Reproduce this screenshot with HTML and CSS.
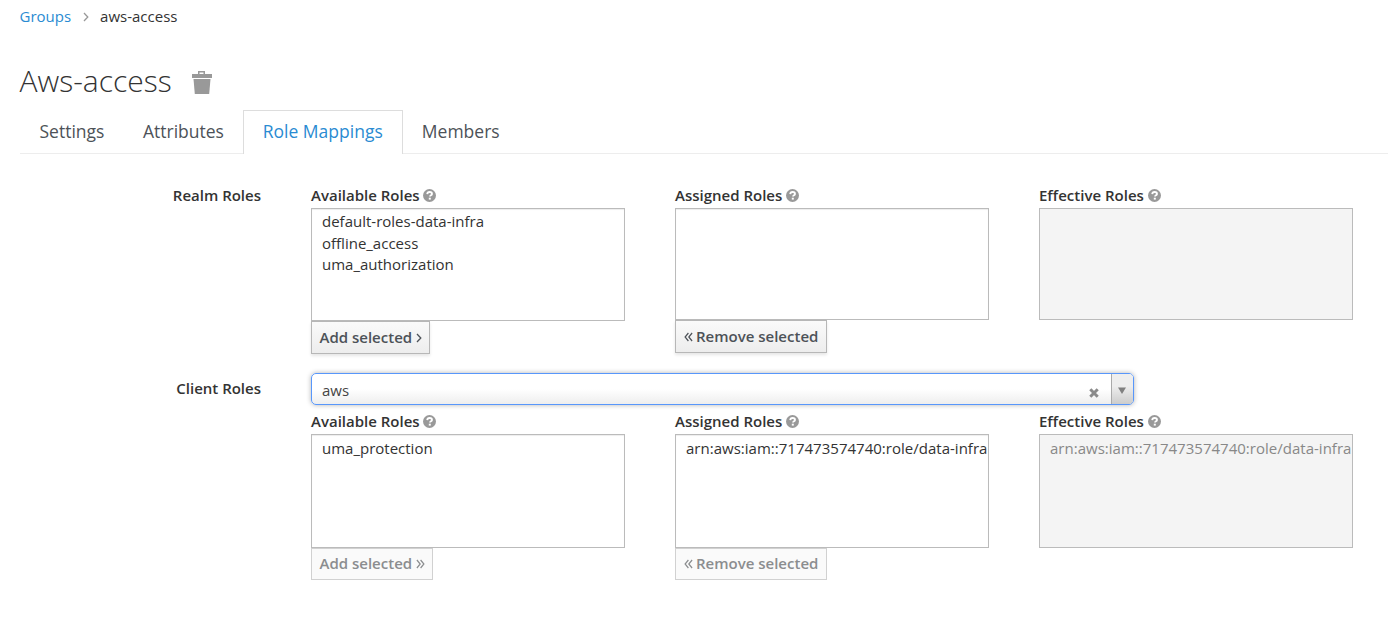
FILE: index.html
```html
<!DOCTYPE html>
<html lang="en">
<head>
<meta charset="utf-8">
<title>Aws-access</title>
<link rel="stylesheet" href="styles.css">
</head>
<body>
<svg class="symbols" width="0" height="0">
  <symbol id="help" viewBox="0 0 13 13"><circle cx="6.5" cy="6.5" r="6.5" fill="#999"/><path d="M4.2 5.1C4.3 3.7 5.2 3 6.6 3S9 3.8 9 4.9C9 6.3 7 6.3 7 7.6" fill="none" stroke="#fff" stroke-width="1.8"/><rect x="5.8" y="8.7" width="2" height="1.9" fill="#fff"/></symbol>
  <symbol id="right" viewBox="0 0 6 10"><path d="M1 1l3.8 4L1 9" fill="none" stroke="currentColor" stroke-width="1.3"/></symbol>
  <symbol id="dright" viewBox="0 0 9 10"><path d="M.9 1l3.3 4L.9 9M4.6 1l3.3 4-3.3 4" fill="none" stroke="currentColor" stroke-width="1.2"/></symbol>
  <symbol id="dleft" viewBox="0 0 9 10"><path d="M4.4 1L1.1 5l3.3 4M8.1 1L4.8 5l3.3 4" fill="none" stroke="currentColor" stroke-width="1.2"/></symbol>
</svg>
<main class="page">
  <nav class="crumbs"><a class="link">Groups</a><svg class="sep" width="6" height="10"><use href="#right"/></svg><span>aws-access</span></nav>
  <header class="heading">
    <h1 class="title">Aws-access</h1>
    <svg class="trash" width="20" height="23" viewBox="0 0 20 23" fill="#999"><path fill-rule="evenodd" d="M6 3V0h7v3h7v4H0V3zM7.500 3h4V1.500h-4z"/><path d="M1.500 8h17L17.200 23H2.800z"/></svg>
  </header>
  <ul class="tabs"><li class="tab">Settings</li><li class="tab">Attributes</li><li class="tab active">Role Mappings</li><li class="tab">Members</li></ul>

  <section class="row realm">
    <div class="label">Realm Roles</div>
    <div class="cols">
      <div class="col"><div class="caption">Available Roles<svg class="help"><use href="#help"/></svg></div>
        <ul class="list tall"><li>default-roles-data-infra</li><li>offline_access</li><li>uma_authorization</li></ul>
        <button class="btn">Add selected<svg class="after" width="6" height="10"><use href="#right"/></svg></button></div>
      <div class="col"><div class="caption">Assigned Roles<svg class="help"><use href="#help"/></svg></div>
        <ul class="list"></ul>
        <button class="btn"><svg class="before" width="9" height="10"><use href="#dleft"/></svg>Remove selected</button></div>
      <div class="col"><div class="caption">Effective Roles<svg class="help"><use href="#help"/></svg></div>
        <ul class="list disabled"></ul></div>
    </div>
  </section>

  <section class="row client">
    <div class="label">Client Roles</div>
    <div class="client-body">
      <div class="select"><span class="value">aws</span>
        <svg class="clear" width="10" height="10" viewBox="0 0 10 10"><path d="M1.300 1.300l7.400 7.400M8.700 1.300L1.300 8.700" stroke="#8b8b8b" stroke-width="3"/></svg>
        <span class="arrow"><svg width="8" height="7" viewBox="0 0 8 7"><path d="M0 .5h8L4 7z" fill="#808080"/></svg></span></div>
      <div class="cols">
        <div class="col"><div class="caption">Available Roles<svg class="help"><use href="#help"/></svg></div>
          <ul class="list client-list"><li>uma_protection</li></ul>
          <button class="btn off" disabled>Add selected<svg class="after" width="9" height="10"><use href="#dright"/></svg></button></div>
        <div class="col"><div class="caption">Assigned Roles<svg class="help"><use href="#help"/></svg></div>
          <ul class="list client-list"><li class="arn">arn:aws:iam::717473574740:role/data-infra</li></ul>
          <button class="btn off" disabled><svg class="before" width="9" height="10"><use href="#dleft"/></svg>Remove selected</button></div>
        <div class="col"><div class="caption">Effective Roles<svg class="help"><use href="#help"/></svg></div>
          <ul class="list client-list disabled"><li class="arn">arn:aws:iam::717473574740:role/data-infra</li></ul></div>
      </div>
    </div>
  </section>
</main>
</body>
</html>
```
FILE: styles.css
```css
* { box-sizing: border-box; }
body { margin: 0; background: #fff; color: #333; font: 15px/22px "Open Sans", sans-serif; overflow: hidden; }
ul { list-style: none; margin: 0; padding: 0; }
.symbols { display: block; height: 0; }
.page { height: 620px; padding: 5px 0 0 20px; }
.crumbs { display: flex; align-items: center; height: 22px; margin-left: -0.5px; }
.link { color: #2a8bd2; }
.sep { margin: 1px 11px 0 12px; color: #999; }
.heading { display: flex; align-items: center; height: 50px; margin-top: 29px; }
.title { margin: 0 0 0 -0.5px; font-size: 30px; font-weight: 300; line-height: 40px; }
.trash { margin: 2px 0 0 20px; }
.tabs { display: flex; height: 48px; padding-top: 4px; border-bottom: 1px solid #ededed; font-size: 17.5px; color: #4d5258; }
.tab { height: 44px; padding: 10px 19.1px 10px 19.5px; line-height: 23px; }
.active { border: 1px solid #ddd; border-bottom: 0; padding: 9px 19px 9px 18.7px; background: #fff; color: #2a8bd2; }
.active + .tab { padding-left: 19.1px; }
.row { display: flex; }
.realm { margin-top: 31px; height: 188px; }
.label { width: 241px; margin-right: 50px; text-align: right; font-weight: 600; }
.realm .label { margin-top: -1px; }
.cols { display: flex; gap: 50px; }
.col { width: 314px; }
.caption { display: flex; align-items: center; height: 23px; padding-bottom: 3px; font-weight: 600; line-height: 20px; }
.help { width: 13px; height: 13px; margin: 1px 0 0 3.8px; }
.list { height: 112px; padding: 2px 0 0 10px; border: 1px solid #bbb; overflow: hidden; white-space: nowrap; line-height: 21.5px; box-shadow: inset 0 1px 1px rgba(0, 0, 0, .075); }
.arn { letter-spacing: .015px; }
.tall { height: 113px; }
.client-list { height: 114px; padding-top: 3px; }
.disabled { background: #f4f4f4; color: #888; box-shadow: none; }
.btn { display: flex; align-items: center; height: 33px; padding: 0 7.5px 1px; border: 1px solid #b7b7b7; background: linear-gradient(#fafafa, #ededed); box-shadow: 0 2px 3px rgba(3, 3, 3, .1); color: #4d5258; font: 600 15px/22px "Open Sans", sans-serif; }
.after { margin: 2px -0.5px 0 3.5px; }
.before { margin: 2px 3.5px 0 0; }
.off { height: 32px; padding-bottom: 2px; border-color: #d1d1d1; background: #fafafa; box-shadow: none; color: #8b8d8f; }
.client .label { padding-top: 4px; }
.select { display: flex; align-items: center; width: 823px; height: 32px; margin-bottom: 6px; border: 1px solid #5897fb; border-radius: 5px; background: linear-gradient(#fff 50%, #eee); box-shadow: 0 0 5px rgba(0, 0, 0, .3); }
.value { flex: 1; padding: 2px 0 0 10px; color: #444; }
.clear { margin: 7px 12px 0 0; }
.arrow { display: flex; align-items: center; justify-content: center; width: 22px; height: 30px; border-left: 1px solid #aaa; border-radius: 0 4px 4px 0; background: linear-gradient(#eee 40%, #ccc); padding: 3px 1px 0 0; }
```
